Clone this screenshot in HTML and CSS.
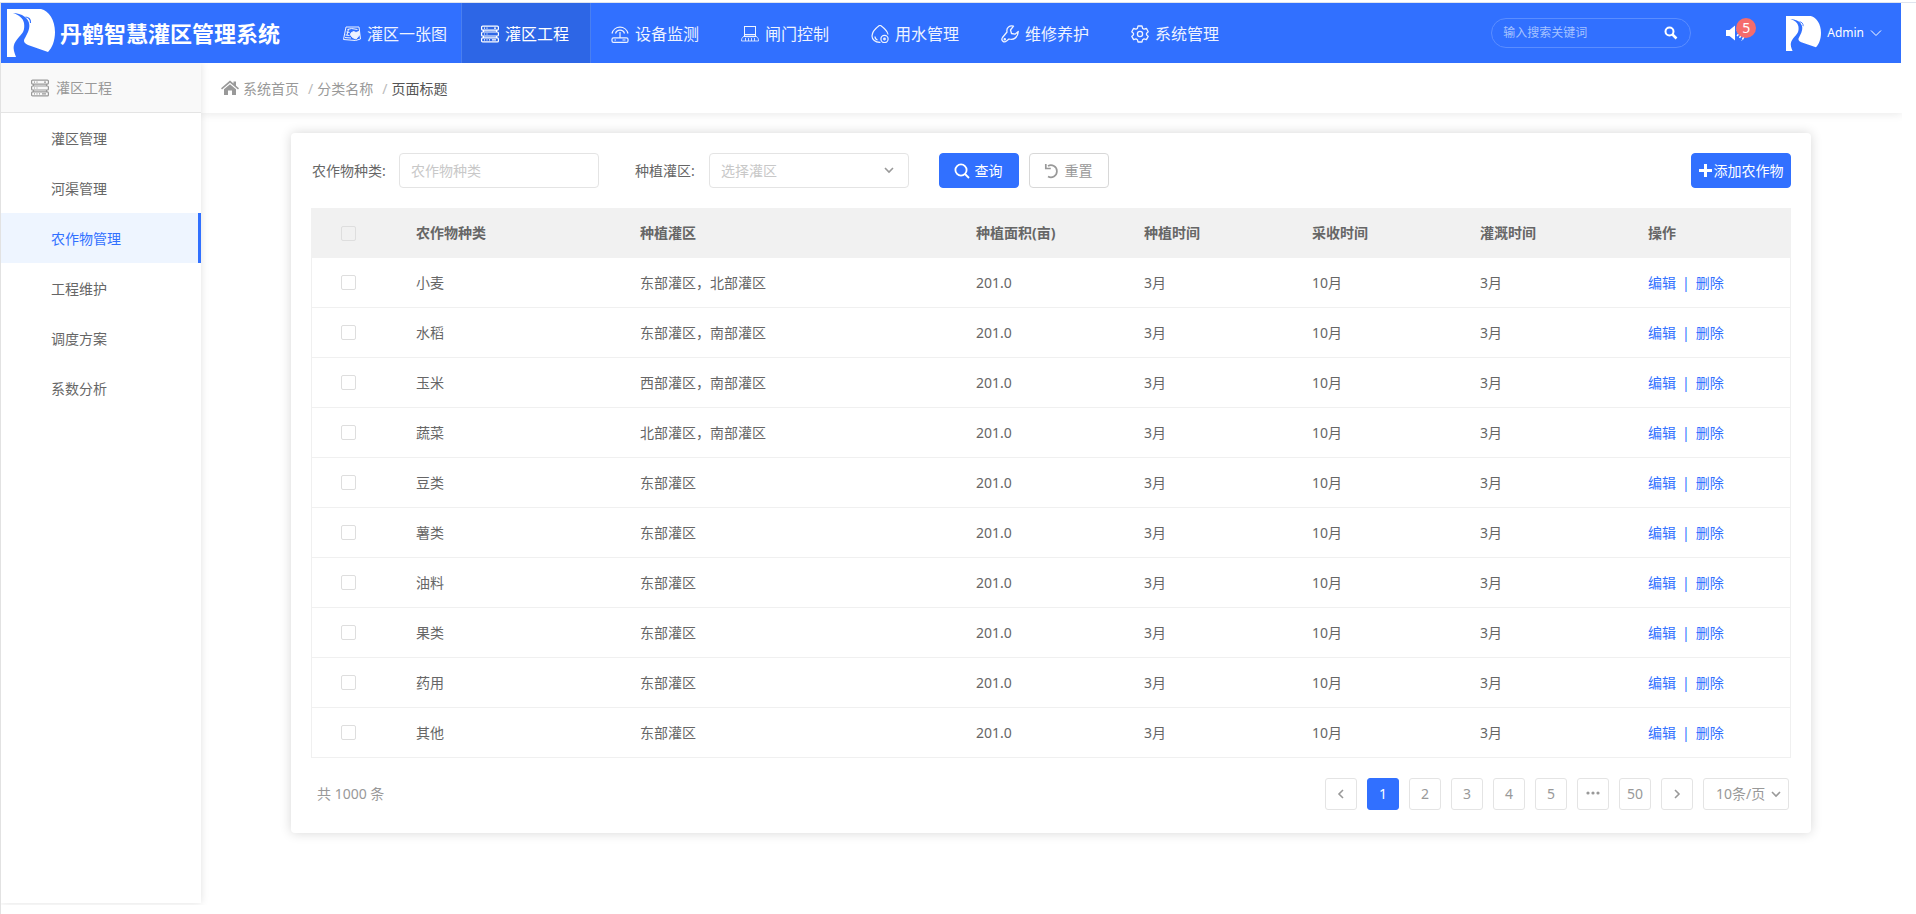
FILE: index.html
```html
<!DOCTYPE html>
<html lang="zh-CN">
<head>
  <meta charset="utf-8" />
  <title>丹鹤智慧灌区管理系统</title>
  <meta name="viewport" content="width=device-width, initial-scale=1" />
  <link rel="stylesheet" href="styles.css">
</head>

<body>
  <!-- 公用图标 -->
  <svg class="symbols" width="0" height="0">
    <symbol id="logo" viewBox="0 0 48 48">
      <path fill="#fff" d="M0 0H34C42 2 48 11 48 23C48 32 45 39 41 43L21 36C17 34 16 32 18 29L21 23C23 18 23 14 20 10L18 8C14 5 10 4 6 4C12 6 16 9 17 14C18 21 16 24 12 28C6 35 5 38 9 48H0Z" />
      <path fill="none" stroke="#3170ff" stroke-width="1.2" d="M18.500 8C21 8 24 10 23.500 14" />
    </symbol>
    <symbol id="server" viewBox="0 0 18 18">
      <g fill="none" stroke="currentColor" stroke-width="1.2">
        <rect x="0.6" y="1.1" width="16.8" height="4" rx="1" />
        <rect x="0.6" y="7" width="16.8" height="4" rx="1" />
        <rect x="0.6" y="12.9" width="16.8" height="4" rx="1" />
        <path d="M3 3.1h1M5.5 3.1h1M13 3.1h2M3 9h1M5.5 9h1M3 14.9h1M5.5 14.9h1M8 14.9h1M11 14.9h4M2.5 5v2M15.5 5v2M2.5 11v2M15.5 11v2" />
      </g>
    </symbol>
    <symbol id="down" viewBox="0 0 12 12">
      <path d="M2 4l4 4 4-4" fill="none" stroke="currentColor" stroke-width="1.6" />
    </symbol>
  </svg>

  <div class="wrapper">
    <header class="header">
      <svg class="logo"><use href="#logo" /></svg>
      <h1>丹鹤智慧灌区管理系统</h1>
      <nav class="nav">
        <a href="#">
          <svg class="icon" viewBox="0 0 18 18" fill="none" stroke="currentColor" stroke-width="1">
            <path d="M3 2h13l1.500 12-5 1.500-12-1z" />
            <path d="M4.500 4.500l4-1 6 1M3.500 7l3 .5M2.500 10l4 .5M2 12.500l6 .5M5.500 4l-1.500 6" />
            <path fill="currentColor" d="M8 8l2.500-1.500 2.500 1 3-1 .5 3.500-3.500 4-3.500-1.500-2-2.500z" />
          </svg>
          灌区一张图
        </a>
        <a href="#" class="active">
          <svg class="icon"><use href="#server" /></svg>
          灌区工程
        </a>
        <a href="#">
          <svg class="icon" viewBox="0 0 18 18" fill="none" stroke="currentColor" stroke-width="1.2">
            <path d="M1 8.500a8.200 8.200 0 0 1 16 0M4.500 8.500a4.700 4.700 0 0 1 9 0M9 7v6" />
            <rect x="1" y="12.800" width="16" height="4.600" rx="1.500" />
            <path d="M3.500 15h1.500M11.500 15h3" />
          </svg>
          设备监测
        </a>
        <a href="#">
          <svg class="icon" viewBox="0 0 18 18" fill="none" stroke="currentColor" stroke-width="1">
            <path d="M3 1.500h12M3.500 2v9.500M14.500 2v9.500M3 9.500h12M2.500 11.500h13" />
            <path fill="currentColor" fill-opacity="0.3" stroke="none" d="M4 9.500h10v3h-10z" />
            <path d="M4 11.500c-2 0-3.500 1-3.500 4.500h17c0-3.500-1.500-4.500-3.500-4.500M4.500 13v3M7.500 13v3M10.500 13v3M13.500 13v3" stroke-opacity="0.8" />
          </svg>
          闸门控制
        </a>
        <a href="#">
          <svg class="icon" viewBox="0 0 18 18" fill="none" stroke="currentColor" stroke-width="1.200">
            <path d="M9.500 17.400C4 17.600 1 14.500 1 11 1 7 5.500 2.500 9 0c3.500 2.500 7.500 6 8 9.500M4 11.500c0 1.500 1 3 2.500 3.500" />
            <circle cx="13.500" cy="14" r="3.600" />
            <circle cx="13.500" cy="14" r="0.800" />
          </svg>
          用水管理
        </a>
        <a href="#">
          <svg class="icon" viewBox="0 0 18 18" fill="none" stroke="currentColor" stroke-width="1.300" stroke-linejoin="round">
            <path d="M12.500 1.200C9 0 5 2.500 6 7L1.500 12.500c-2 3 1.500 5.500 4 3.500l2.500-2c5 1.500 9-2 9.300-7.500L14 9.200 10.500 8.500 9.500 5z" />
            <circle cx="3.800" cy="14.200" r="0.600" />
          </svg>
          维修养护
        </a>
        <a href="#">
          <svg class="icon" viewBox="0 0 18 18" fill="none" stroke="currentColor" stroke-width="1.300" stroke-linejoin="round">
            <path d="M7 1h4l.6 2.400 1.400.8 2.500-.7 1.700 3.200L15.500 8.400v1.300l1.700 1.700-1.800 3.200-2.400-.7-1.400.8L11 17H7l-.6-2.300-1.400-.8-2.400.7-1.800-3.200 1.700-1.700V8.400L.8 6.700 2.500 3.500 5 4.200l1.400-.8z" />
            <circle cx="9" cy="9" r="2.600" />
          </svg>
          系统管理
        </a>
      </nav>
      <form class="search">
        <input type="text" placeholder="输入搜索关键词" aria-label="搜索" />
        <button type="button" aria-label="搜索">
          <svg width="14" height="14" viewBox="0 0 14 14" fill="none" stroke="currentColor">
            <circle cx="5.500" cy="5.500" r="4" stroke-width="2" />
            <path d="M8.500 8.500l4 4" stroke-width="2.500" />
          </svg>
        </button>
      </form>
      <a href="#" class="notice" aria-label="消息">
        <svg width="20" height="18" viewBox="0 0 20 18" fill="currentColor">
          <path d="M0 6h3.500L9 1.500v15L3.500 12H0z" />
          <path d="M11 6a4 4 0 0 1 0 6M13 3.500a8 8 0 0 1 0 11M15.500 1.500a11 11 0 0 1 0 15" fill="none" stroke="currentColor" stroke-width="1.500" stroke-dasharray="3 1" />
        </svg>
        <span class="badge">5</span>
      </a>
      <a href="#" class="user">
        <svg class="avatar"><use href="#logo" /></svg>
        Admin
        <svg width="12" height="12" viewBox="0 0 12 12" fill="none" stroke="currentColor"><path d="M1 3.500l5 5 5-5" /></svg>
      </a>
    </header>

    <div class="main">
      <aside class="sidebar">
        <h2><svg class="icon"><use href="#server" /></svg>灌区工程</h2>
        <a href="#">灌区管理</a>
        <a href="#">河渠管理</a>
        <a href="#" class="active">农作物管理</a>
        <a href="#">工程维护</a>
        <a href="#">调度方案</a>
        <a href="#">系数分析</a>
      </aside>

      <div class="content">
        <div class="crumbs">
          <svg width="18" height="16" viewBox="0 0 18 16" fill="currentColor">
            <path d="M9 0.500l3.500 3V1.500H15v4.200l3 2.600-1 1.200L9 2.700 1 9.500 0 8.300z" />
            <path d="M9 4.300l6 5V15h-4v-4.500H7V15H3V9.300z" />
          </svg>
          <a href="#">系统首页</a>
          <i>/</i>
          <a href="#">分类名称</a>
          <i>/</i>
          <span>页面标题</span>
        </div>

        <div class="card">
          <form class="filter">
            <label for="crop">农作物种类:</label>
            <input type="text" id="crop" placeholder="农作物种类" />
            <label for="area" class="area-label">种植灌区:</label>
            <div class="select">
              <select id="area">
                <option>选择灌区</option>
              </select>
              <svg class="arrow"><use href="#down" /></svg>
            </div>
            <button type="button" class="btn primary query">
              <svg width="16" height="16" viewBox="0 0 16 16" fill="none" stroke="currentColor" stroke-width="1.800">
                <circle cx="7" cy="7" r="5.600" />
                <path d="M11 11l4 4" />
              </svg>
              查询
            </button>
            <button type="button" class="btn">
              <svg width="16" height="16" viewBox="0 0 16 16" fill="none" stroke="currentColor" stroke-width="1.700">
                <path d="M4 13.500a6 6 0 1 0 0-10.500M1.800 1v4.500h5" />
              </svg>
              重置
            </button>
            <button type="button" class="btn primary add">
              <svg width="13" height="13" viewBox="0 0 13 13" stroke="currentColor" stroke-width="3"><path d="M6.500 0v13M0 6.500h13" /></svg>
              添加农作物
            </button>
          </form>

          <table>
            <colgroup>
              <col class="c-check" />
              <col class="c-crop" />
              <col class="c-area" />
              <col class="c-num" />
              <col class="c-num" />
              <col class="c-num" />
              <col class="c-num" />
              <col class="c-op" />
            </colgroup>
            <thead>
              <tr>
                <th><input type="checkbox" aria-label="全选" /></th>
                <th>农作物种类</th>
                <th>种植灌区</th>
                <th>种植面积(亩)</th>
                <th>种植时间</th>
                <th>采收时间</th>
                <th>灌溉时间</th>
                <th>操作</th>
              </tr>
            </thead>
            <tbody>
              <tr>
                <td><input type="checkbox" aria-label="小麦" /></td>
                <td>小麦</td><td>东部灌区，北部灌区</td><td>201.0</td><td>3月</td><td>10月</td><td>3月</td>
                <td><a href="#">编辑</a><b>|</b><a href="#">删除</a></td>
              </tr>
              <tr>
                <td><input type="checkbox" aria-label="水稻" /></td>
                <td>水稻</td><td>东部灌区，南部灌区</td><td>201.0</td><td>3月</td><td>10月</td><td>3月</td>
                <td><a href="#">编辑</a><b>|</b><a href="#">删除</a></td>
              </tr>
              <tr>
                <td><input type="checkbox" aria-label="玉米" /></td>
                <td>玉米</td><td>西部灌区，南部灌区</td><td>201.0</td><td>3月</td><td>10月</td><td>3月</td>
                <td><a href="#">编辑</a><b>|</b><a href="#">删除</a></td>
              </tr>
              <tr>
                <td><input type="checkbox" aria-label="蔬菜" /></td>
                <td>蔬菜</td><td>北部灌区，南部灌区</td><td>201.0</td><td>3月</td><td>10月</td><td>3月</td>
                <td><a href="#">编辑</a><b>|</b><a href="#">删除</a></td>
              </tr>
              <tr>
                <td><input type="checkbox" aria-label="豆类" /></td>
                <td>豆类</td><td>东部灌区</td><td>201.0</td><td>3月</td><td>10月</td><td>3月</td>
                <td><a href="#">编辑</a><b>|</b><a href="#">删除</a></td>
              </tr>
              <tr>
                <td><input type="checkbox" aria-label="薯类" /></td>
                <td>薯类</td><td>东部灌区</td><td>201.0</td><td>3月</td><td>10月</td><td>3月</td>
                <td><a href="#">编辑</a><b>|</b><a href="#">删除</a></td>
              </tr>
              <tr>
                <td><input type="checkbox" aria-label="油料" /></td>
                <td>油料</td><td>东部灌区</td><td>201.0</td><td>3月</td><td>10月</td><td>3月</td>
                <td><a href="#">编辑</a><b>|</b><a href="#">删除</a></td>
              </tr>
              <tr>
                <td><input type="checkbox" aria-label="果类" /></td>
                <td>果类</td><td>东部灌区</td><td>201.0</td><td>3月</td><td>10月</td><td>3月</td>
                <td><a href="#">编辑</a><b>|</b><a href="#">删除</a></td>
              </tr>
              <tr>
                <td><input type="checkbox" aria-label="药用" /></td>
                <td>药用</td><td>东部灌区</td><td>201.0</td><td>3月</td><td>10月</td><td>3月</td>
                <td><a href="#">编辑</a><b>|</b><a href="#">删除</a></td>
              </tr>
              <tr>
                <td><input type="checkbox" aria-label="其他" /></td>
                <td>其他</td><td>东部灌区</td><td>201.0</td><td>3月</td><td>10月</td><td>3月</td>
                <td><a href="#">编辑</a><b>|</b><a href="#">删除</a></td>
              </tr>
            </tbody>
          </table>

          <div class="pager">
            <span class="total">共 1000 条</span>
            <button type="button" aria-label="上一页">
              <svg width="12" height="12" viewBox="0 0 12 12"><path d="M8 2L4 6l4 4" /></svg>
            </button>
            <button type="button" class="active">1</button>
            <button type="button">2</button>
            <button type="button">3</button>
            <button type="button">4</button>
            <button type="button">5</button>
            <button type="button" aria-label="更多">
              <svg width="14" height="12" viewBox="0 0 14 12"><g class="dots"><circle cx="2" cy="5" r="1.600" /><circle cx="7" cy="5" r="1.600" /><circle cx="12" cy="5" r="1.600" /></g></svg>
            </button>
            <button type="button">50</button>
            <button type="button" aria-label="下一页">
              <svg width="12" height="12" viewBox="0 0 12 12"><path d="M4 2l4 4-4 4" /></svg>
            </button>
            <div class="select">
              <select aria-label="每页条数">
                <option>10条/页</option>
              </select>
              <svg class="arrow"><use href="#down" /></svg>
            </div>
          </div>
        </div>
      </div>
    </div>
  </div>
</body>
</html>
```
FILE: styles.css
```css
* {
  box-sizing: border-box;
  padding: 0;
  margin: 0;
}

body {
  border-top: 2px solid #fff;
  font: 14px/20px "Noto Sans", "Noto Sans CJK SC", sans-serif;
  color: #666;
  background: #fff;
}

a {
  color: inherit;
  text-decoration: none;
}

i, b {
  font-style: normal;
  font-weight: normal;
}

input, select, button {
  font: inherit;
  color: inherit;
  background: none;
  border: none;
  outline: none;
}

button, select {
  cursor: pointer;
}

svg {
  flex: none;
}

.symbols {
  position: absolute;
}

.icon {
  width: 18px;
  height: 18px;
}

.wrapper {
  min-height: calc(100vh - 2px);
  padding-right: 15px;
  border-top: 1px solid #dfe4ee;
  border-left: 1px solid #e2e2e2;
}

/* 顶部导航 */
.header {
  height: 60px;
  padding-left: 6px;
  display: flex;
  align-items: center;
  color: #fff;
  background: #3170ff;
}

.logo {
  width: 48px;
  height: 48px;
}

h1 {
  width: 276px;
  padding-left: 5px;
  font-size: 22px;
  line-height: 30px;
  font-weight: 700;
}

.nav {
  display: flex;
  height: 100%;
}

.nav a {
  width: 130px;
  padding: 2px 2px 0 0;
  display: flex;
  align-items: center;
  justify-content: center;
  gap: 6px;
  font-size: 16px;
  color: #eef3ff;
}

.nav a.active {
  color: #fff;
  background: #2d66e6;
  border: solid #4a7ff0;
  border-width: 0 1px;
}

.search {
  width: 200px;
  height: 30px;
  margin-left: auto;
  padding: 0 12px 0 11px;
  display: flex;
  align-items: center;
  border: 1px solid #5a8dff;
  border-radius: 15px;
}

.search input {
  flex: 1;
  min-width: 0;
  font-size: 12px;
}

.search input::placeholder {
  color: #a5c2ff;
}

.search button {
  height: 14px;
  line-height: 14px;
}

.notice {
  position: relative;
  height: 18px;
  margin: 0 40px 0 35px;
  line-height: 18px;
}

.badge {
  position: absolute;
  left: 10px;
  top: -6px;
  width: 20px;
  height: 20px;
  line-height: 20px;
  text-align: center;
  border-radius: 50%;
  background: #f56c6c;
}

.user {
  display: flex;
  align-items: center;
  gap: 6px;
  padding-right: 19px;
  font-size: 12px;
}

.avatar {
  width: 35px;
  height: 35px;
}

/* 左侧菜单 */
.main {
  display: flex;
}

.sidebar {
  position: relative;
  width: 200px;
  min-height: 840px;
  flex: none;
  background: #fff;
  box-shadow: 0 0 8px rgba(0, 0, 0, 0.12);
  clip-path: inset(0 -12px -2px 0);
}

.sidebar h2 {
  height: 50px;
  padding-left: 30px;
  display: flex;
  align-items: center;
  gap: 7px;
  font-size: 14px;
  font-weight: normal;
  color: #999;
  background: #f9f9f9;
  border-bottom: 1px solid #e4e4e4;
}

.sidebar a {
  display: block;
  height: 50px;
  line-height: 52px;
  padding-left: 50px;
}

.sidebar a.active {
  color: #3170ff;
  background: #eef5ff;
  border-right: 3px solid #3170ff;
}

/* 右侧内容 */
.content {
  flex: 1;
}

.crumbs {
  height: 50px;
  padding: 2px 0 0 20px;
  display: flex;
  align-items: center;
  color: #999;
  box-shadow: 0 2px 8px rgba(0, 0, 0, 0.08);
  clip-path: inset(0 0 -12px 0);
}

.crumbs svg {
  margin: 0 4px 2px 0;
}

.crumbs i {
  padding: 0 4px 0 9px;
  color: #bbb;
}

.crumbs span {
  color: #555;
}

.card {
  margin: 20px 91px 0 90px;
  padding: 20px 20px 23px;
  border-radius: 4px;
  background: #fff;
  box-shadow: 0 0 12px rgba(0, 0, 0, 0.16);
}

.filter {
  display: flex;
  align-items: center;
  margin-bottom: 20px;
}

.filter label {
  width: 88px;
  padding-left: 1px;
}

.filter .area-label {
  width: 75px;
  margin-left: 35px;
}

.filter > input,
.filter select {
  width: 200px;
  height: 35px;
  padding: 0 11px;
  border: 1px solid #e4e4e4;
  border-radius: 4px;
}

.filter > input::placeholder,
.filter select {
  color: #c8c8c8;
}

.select {
  position: relative;
}

.select select {
  display: block;
  appearance: none;
}

.arrow {
  position: absolute;
  right: 14px;
  top: 11px;
  width: 12px;
  height: 12px;
  color: #999;
  pointer-events: none;
}

.btn {
  width: 80px;
  height: 35px;
  margin-left: 10px;
  padding-right: 2px;
  display: flex;
  align-items: center;
  justify-content: center;
  gap: 5px;
  color: #999;
  border: 1px solid #d8d8d8;
  border-radius: 4px;
}

.btn.primary {
  color: #fff;
  background: #3170ff;
  border-color: #3170ff;
}

.btn.query {
  margin-left: 30px;
}

.btn.add {
  width: 100px;
  margin-left: auto;
  padding: 0;
  gap: 2px;
}

/* 表格 */
table {
  width: 100%;
  table-layout: fixed;
  border-collapse: separate;
  border-spacing: 0;
}

.c-check { width: 75px; }
.c-crop { width: 224px; }
.c-area { width: 336px; }
.c-num { width: 168px; }
.c-op { width: 173px; }

th, td {
  height: 50px;
  padding: 0 0 0 30px;
  text-align: left;
}

th {
  background: #f1f1f1;
}

td {
  border-bottom: 1px solid #f0f0f0;
}

td:first-child {
  padding-left: 29px;
  border-left: 1px solid #f0f0f0;
}

td:last-child {
  border-right: 1px solid #f0f0f0;
}

td b {
  padding: 0 6px;
}

td b, td a {
  color: #3170ff;
}

input[type="checkbox"] {
  display: block;
  width: 15px;
  height: 15px;
  appearance: none;
  border: 1px solid #dedede;
  border-radius: 2px;
}

/* 分页 */
.pager {
  display: flex;
  align-items: center;
  gap: 10px;
  margin-top: 20px;
  padding: 0 2px 0 6px;
  color: #999;
}

.total {
  margin-right: auto;
}

.pager button {
  width: 32px;
  height: 32px;
  display: flex;
  align-items: center;
  justify-content: center;
  border: 1px solid #e4e4e4;
  border-radius: 3px;
}

.pager button.active {
  color: #fff;
  background: #3170ff;
  border-color: #3170ff;
}

.pager button svg {
  fill: none;
  stroke: currentColor;
  stroke-width: 1.6;
}

.pager .dots {
  fill: currentColor;
  stroke: none;
}

.pager select {
  width: 86px;
  height: 32px;
  padding-left: 12px;
  border: 1px solid #e4e4e4;
  border-radius: 3px;
}

.pager .arrow {
  right: 7px;
  top: 10px;
}
```
